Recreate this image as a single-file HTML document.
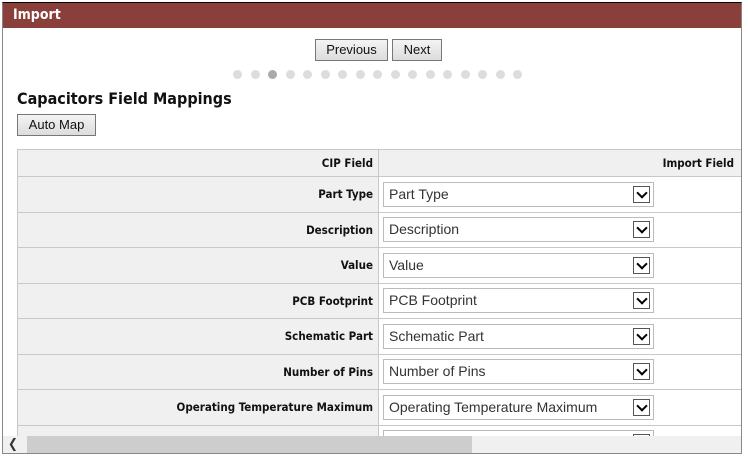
<!DOCTYPE html><html><head><style>
*{box-sizing:border-box;margin:0;padding:0}
body{width:748px;height:459px;background:#fff;position:relative;overflow:hidden;font-family:"DejaVu Sans Condensed","DejaVu Sans",sans-serif}
.frame{position:absolute;left:2px;top:2px;width:740px;height:452px;border:1px solid #888;border-top:1px solid #000;overflow:hidden}
.hdr{position:absolute;left:0;top:0;width:100%;height:25px;background:#8b3f3b;color:#fff;font-weight:bold;font-size:14px;padding:4px 0 0 10px}
.btn{position:absolute;height:22px;background:linear-gradient(#f4f4f4,#dcdcdc);border:1px solid #777;font:13px "Liberation Sans",sans-serif;text-align:center;line-height:20px;color:#111}
.dot{position:absolute;top:67px;width:9px;height:9px;border-radius:50%;background:#ddd}
h1{position:absolute;left:14px;top:86px;font-size:16px;font-weight:bold;color:#111}
table{position:absolute;left:14px;top:146px;border-collapse:collapse;width:740px}
td{border:1px solid #c8c8c8;background:#f0f0f0;height:35.5px;font-size:11.5px;font-weight:bold;text-align:right;padding-right:5px;color:#111}
td.r{background:#fff;text-align:left;padding-left:4px}
tr.h td{height:27px;background:#f0f0f0;text-align:right}
.sel{width:271px;height:25px;border:1px solid #bbb;position:relative;font:14px "Liberation Sans",sans-serif;font-weight:normal;color:#333;padding:3px 0 0 5px}
.sel i{position:absolute;right:3px;top:3px;width:17px;height:17px;border:1px solid #555;background:#fff}
.sel i:after{content:"";position:absolute;left:4px;top:2px;width:6px;height:6px;border-right:2px solid #000;border-bottom:2px solid #000;transform:rotate(45deg)}
.sb{position:absolute;left:0;top:433px;width:740px;height:17px;background:#f0f0f0}
.thumb{position:absolute;left:24px;top:0;width:445px;height:17px;background:#cdcdcd}
</style></head><body>
<div class="frame">
<div class="hdr">Import</div>
<div class="btn" style="left:312px;top:36px;width:73px">Previous</div>
<div class="btn" style="left:389px;top:36px;width:50px">Next</div>
<div class="dot" style="left:230px"></div><div class="dot" style="left:247.5px"></div><div class="dot" style="left:265px;background:#aaa"></div><div class="dot" style="left:282.5px"></div><div class="dot" style="left:300px"></div><div class="dot" style="left:317.5px"></div><div class="dot" style="left:335px"></div><div class="dot" style="left:352.5px"></div><div class="dot" style="left:370px"></div><div class="dot" style="left:387.5px"></div><div class="dot" style="left:405px"></div><div class="dot" style="left:422.5px"></div><div class="dot" style="left:440px"></div><div class="dot" style="left:457.5px"></div><div class="dot" style="left:475px"></div><div class="dot" style="left:492.5px"></div><div class="dot" style="left:510px"></div>
<h1>Capacitors Field Mappings</h1>
<div class="btn" style="left:14px;top:111px;width:79px">Auto Map</div>
<table>
<tr class="h"><td style="width:361px">CIP Field</td><td style="text-align:right;padding-right:22px">Import Field</td></tr>
<tr><td>Part Type</td><td class="r"><div class="sel">Part Type<i></i></div></td></tr>
<tr><td>Description</td><td class="r"><div class="sel">Description<i></i></div></td></tr>
<tr><td>Value</td><td class="r"><div class="sel">Value<i></i></div></td></tr>
<tr><td>PCB Footprint</td><td class="r"><div class="sel">PCB Footprint<i></i></div></td></tr>
<tr><td>Schematic Part</td><td class="r"><div class="sel">Schematic Part<i></i></div></td></tr>
<tr><td>Number of Pins</td><td class="r"><div class="sel">Number of Pins<i></i></div></td></tr>
<tr><td>Operating Temperature Maximum</td><td class="r"><div class="sel">Operating Temperature Maximum<i></i></div></td></tr>
<tr><td></td><td class="r"><div class="sel">Operating Temperature Minimum<i></i></div></td></tr>
</table>
<div class="sb"><div class="thumb"></div><div style="position:absolute;left:5px;top:0;font-size:13px;line-height:17px;color:#333">&#10094;</div></div>
</div>
</body></html>
